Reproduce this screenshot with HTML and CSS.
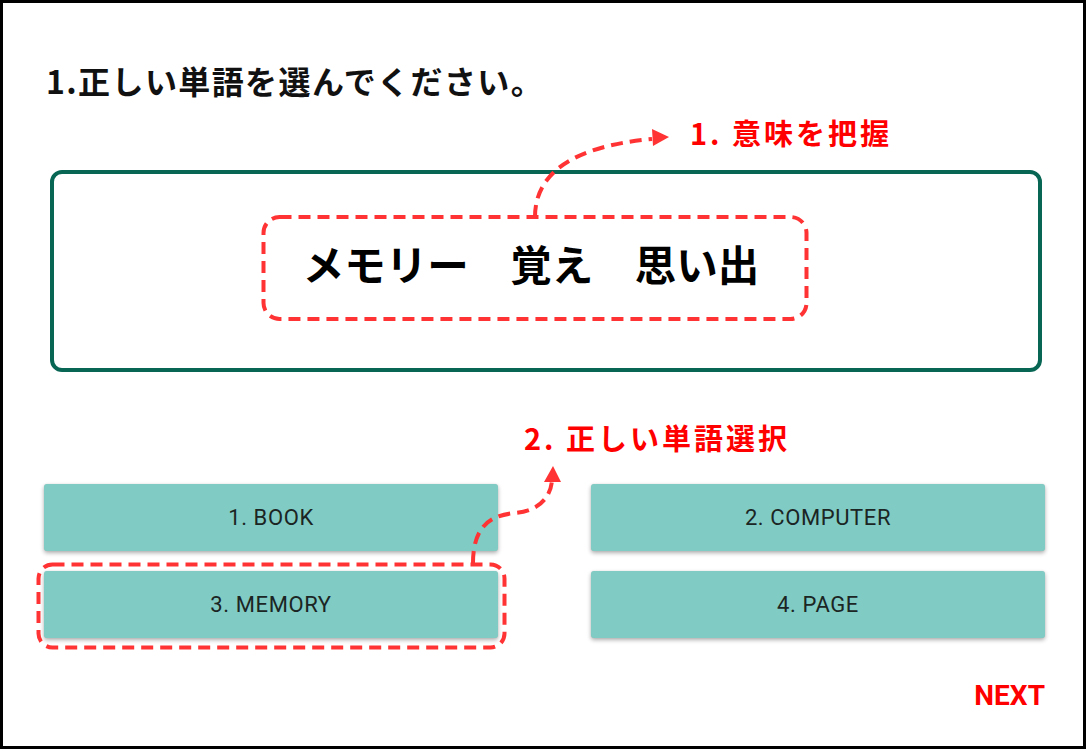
FILE: index.html
```html
<!DOCTYPE html>
<html lang="ja">
<head>
<meta charset="utf-8">
<link rel="stylesheet" href="styles.css">
</head>
<body>
<div class="frame">
  <h1 class="title">1.正しい単語を選んでください。</h1>
  <div class="card">
    <span class="word">メモリー　覚え　思い出</span>
  </div>
  <div class="choices">
    <button class="choice">1. BOOK</button>
    <button class="choice">2. COMPUTER</button>
    <button class="choice">3. MEMORY</button>
    <button class="choice">4. PAGE</button>
  </div>
  <div class="footer"><span class="next">NEXT</span></div>

  <div class="note note-1">1. 意味を把握</div>
  <div class="note note-2">2. 正しい単語選択</div>
  <svg class="marks" width="1086" height="749" viewBox="0 0 1086 749" xmlns="http://www.w3.org/2000/svg">
    <g fill="none" stroke="#ff3333" stroke-width="4" stroke-dasharray="12 7">
      <rect x="263.5" y="217" width="543" height="102" rx="16"/>
      <rect x="38.5" y="564.5" width="466" height="83" rx="14"/>
      <path d="M535 217 C 535 172, 575 146, 652 139"/>
      <path d="M473 563 C 473 522, 495 515, 515 513 C 540 511, 551 496, 552 480"/>
    </g>
    <g fill="#ff3333">
      <path d="M669 137 L652 129 L653 146 Z"/>
      <path d="M553 466 L544 482 L561 482 Z"/>
    </g>
  </svg>
</div>
</body>
</html>
```
FILE: styles.css
```css
* { box-sizing: border-box; }
html, body { margin: 0; padding: 0; background: #fff; }
.frame {
  position: relative;
  width: 1086px;
  height: 749px;
  border: 3px solid #000;
  overflow: hidden;
  font-family: "Noto Sans CJK JP", "Noto Sans", sans-serif;
}
.title {
  margin: 53px 0 0 43px;
  font-size: 32px;
  line-height: 48px;
  font-weight: 700;
  letter-spacing: 1.4px;
  color: #111;
}
.card {
  margin: 66px 0 0 47px;
  width: 992px;
  height: 202px;
  border: 4px solid #086654;
  border-radius: 12px;
  display: flex;
  align-items: center;
  justify-content: center;
  padding: 0 30px 14px 0;
}
.word {
  font-size: 41.5px;
  font-weight: 700;
  color: #000;
  line-height: 1;
}
.choices {
  margin: 112px 0 0 41px;
  width: 1001px;
  display: grid;
  grid-template-columns: 454px 454px;
  column-gap: 93px;
  row-gap: 20px;
}
.choice {
  height: 67px;
  border: none;
  border-radius: 3px;
  background: #80cbc4;
  box-shadow: 0 2px 4px rgba(0,0,0,0.32), 0 0 1px rgba(0,0,0,0.14);
  font-family: Roboto, "Liberation Sans", sans-serif;
  font-size: 22px;
  letter-spacing: 0.6px;
  color: #1b2523;
  padding: 0;
}
.footer {
  margin-top: 44px;
  padding-right: 38px;
  display: flex;
  justify-content: flex-end;
}
.next {
  font-family: Roboto, "Liberation Sans", sans-serif;
  font-weight: 700;
  font-size: 28px;
  line-height: 28px;
  color: #ff0000;
}
.note {
  position: absolute;
  font-size: 29px;
  line-height: 1;
  font-weight: 700;
  letter-spacing: 3px;
  color: #ff0000;
  white-space: nowrap;
}
.note-1 { left: 687px; top: 115px; }
.note-2 { left: 521px; top: 420px; }
.marks {
  position: absolute;
  left: -3px;
  top: -3px;
  pointer-events: none;
}
```
